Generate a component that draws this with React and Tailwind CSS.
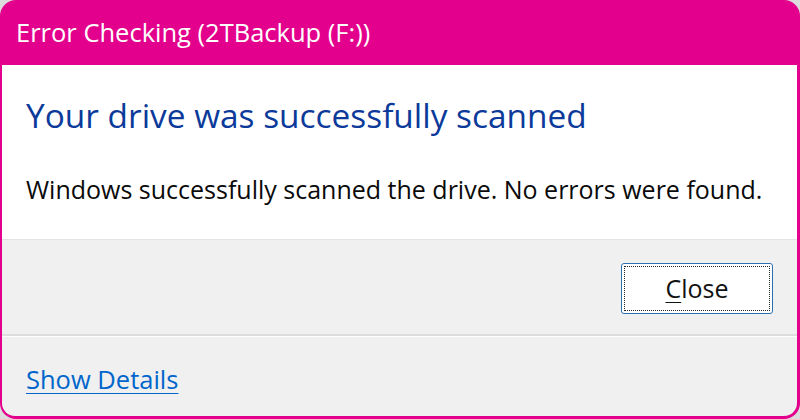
import React from 'react';

const font = { fontFamily: '"Open Sans", "Noto Sans", sans-serif' };

export default function App() {
    return (
        <div className="w-[800px] h-[419px] bg-[#dcdcdc]" style={font}>
            <div className="h-full rounded-[16px] bg-[#e3008c] flex flex-col pl-[2px] pr-[3px] pb-[3px]">
                <div className="h-[65px] shrink-0 flex items-center pl-[14px] text-white text-[25.5px]">
                    Error Checking (2TBackup (F:))
                </div>
                <div className="flex-1 flex flex-col rounded-b-[13px] overflow-hidden bg-[#f0f0f0]">
                    <div className="h-[175px] shrink-0 bg-white border-b border-[#e3e3e3] pl-[24px] pt-[28px]">
                        <h1 className="text-[33.4px] leading-[44px] text-[#0b3a9a]">Your drive was successfully scanned</h1>
                        <p className="mt-[36px] text-[25px] leading-[32px] text-[#0a0a0a]">
                            Windows successfully scanned the drive. No errors were found.
                        </p>
                    </div>
                    <div className="h-[94px] shrink-0 flex items-center justify-end pr-[24px] pt-[2px]">
                        <button className="w-[152px] h-[51px] bg-white border border-[#2a6fb0] rounded-[3px] p-[2px]">
                            <span className="w-full h-full flex items-center justify-center pt-[2px] border border-dotted border-[#222] text-[25px] text-[#111]">
                                <span className="underline underline-offset-4 decoration-1">C</span>lose
                            </span>
                        </button>
                    </div>
                    <div className="h-[3px] shrink-0 bg-[#dddddd] border-b border-white" />
                    <div className="flex-1 flex items-center pl-[24px] pt-[6px]">
                        <a href="#" className="text-[25.5px] text-[#0066cc] underline underline-offset-4 decoration-1">
                            Show Details
                        </a>
                    </div>
                </div>
            </div>
        </div>
    );
}
